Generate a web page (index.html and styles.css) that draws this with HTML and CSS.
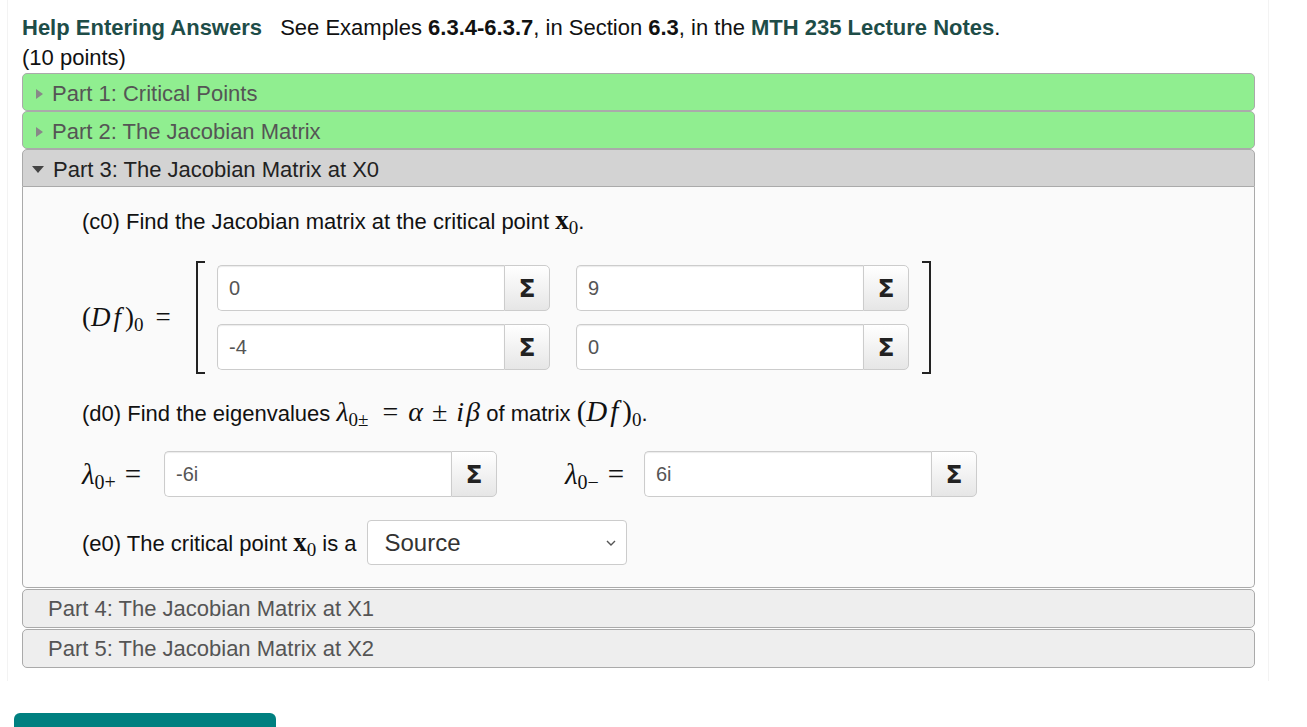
FILE: index.html
```html
<!DOCTYPE html>
<html lang="en">
<head>
    <meta charset="UTF-8">
    <meta name="viewport" content="width=device-width, initial-scale=1.0">
    <title>Jacobian Matrix</title>
    <link rel="stylesheet" href="styles.css">
</head>
<body>
    <div class="problem">
        <div class="intro">
            <b class="link">Help Entering Answers</b>
            <span class="spacer"></span>See Examples <b>6.3.4-6.3.7</b>, in Section <b>6.3</b>, in the <b class="link">MTH 235 Lecture Notes</b>.
        </div>
        <div class="points">(10 points)</div>

        <div class="accordion">
            <div class="part-head done"><span class="tri right"></span>Part 1: Critical Points</div>
            <div class="part-head done"><span class="tri right"></span>Part 2: The Jacobian Matrix</div>
            <div class="part-head open"><span class="tri down"></span>Part 3: The Jacobian Matrix at X0</div>
            <div class="part-body">
                <p class="question">(c0) Find the Jacobian matrix at the critical point <span class="bx">x</span><sub class="msub">0</sub>.</p>

                <div class="matrix-row">
                    <div class="math lhs">(<i>D</i><i class="f">f</i>)<sub class="msub">0</sub><span class="eq">=</span></div>
                    <div class="bracket left"></div>
                    <div class="matrix">
                        <div class="answer"><input type="text" value="0"><button class="sigma">Σ</button></div>
                        <div class="answer"><input type="text" value="9"><button class="sigma">Σ</button></div>
                        <div class="answer"><input type="text" value="-4"><button class="sigma">Σ</button></div>
                        <div class="answer"><input type="text" value="0"><button class="sigma">Σ</button></div>
                    </div>
                    <div class="bracket right"></div>
                </div>

                <p class="question">(d0) Find the eigenvalues <span class="math mid"><i>λ</i><sub class="msub">0±</sub><span class="eq">=</span><i>α</i><span class="pm">±</span><i class="i">i</i><i>β</i></span> of matrix <span class="math big">(<i>D</i><i class="f">f</i>)<sub class="msub">0</sub></span>.</p>

                <div class="eigen-row">
                    <div class="math lam"><i>λ</i><sub class="msub">0+</sub><span class="eq">=</span></div>
                    <div class="answer"><input type="text" value="-6i"><button class="sigma">Σ</button></div>
                    <div class="math lam second"><i>λ</i><sub class="msub">0−</sub><span class="eq">=</span></div>
                    <div class="answer"><input type="text" value="6i"><button class="sigma">Σ</button></div>
                </div>

                <div class="select-row">
                    <span>(e0) The critical point <span class="bx">x</span><sub class="msub">0</sub> is a</span>
                    <div class="select">Source
                        <svg width="12" height="8" viewBox="0 0 12 8"><path d="M2 2 L6 6 L10 2" fill="none" stroke="#555" stroke-width="1.4"/></svg>
                    </div>
                </div>
            </div>
            <div class="part-head closed">Part 4: The Jacobian Matrix at X1</div>
            <div class="part-head closed">Part 5: The Jacobian Matrix at X2</div>
        </div>
    </div>
    <button class="submit"></button>
</body>
</html>
```

FILE: styles.css
```css
body {
    margin: 0;
    font-family: "Liberation Sans", Arial, sans-serif;
    color: #111;
    background: #fff;
}

.problem {
    width: 1233px;
    margin-left: 7px;
    padding: 13px 13px 13px 14px;
    border-left: 1px solid #f3f3f3;
    border-right: 1px solid #f3f3f3;
}

.intro, .points {
    font-size: 22px;
    line-height: 30px;
}

.link {
    color: #1e4d48;
}

.spacer {
    display: inline-block;
    width: 12px;
}

.part-head {
    height: 33px;
    padding-top: 3px;
    font-size: 22px;
    border: 1px solid #aaa;
    border-radius: 5px;
    padding-left: 8px;
    display: flex;
    align-items: center;
}

.part-head.done {
    background: #90ee90;
    color: #555;
}

.part-head.open {
    background: #d3d3d3;
    color: #222;
    border-radius: 5px 5px 0 0;
}

.part-head.closed {
    background: #eee;
    color: #555;
    padding-left: 25px;
    height: 37px;
    padding-top: 0;
    margin-top: 1px;
}

.tri {
    display: inline-block;
    width: 0;
    height: 0;
    margin-right: 9px;
}

.tri.right {
    border-top: 5px solid transparent;
    border-bottom: 5px solid transparent;
    border-left: 7px solid #888;
    margin-left: 5px;
}

.tri.down {
    border-left: 6px solid transparent;
    border-right: 6px solid transparent;
    border-top: 7px solid #444;
    margin-left: 1px;
    margin-right: 9px;
}

.part-body {
    background: #fafafa;
    border: 1px solid #aaa;
    border-top: none;
    border-radius: 0 0 5px 5px;
    padding: 20px 0 22px 59px;
    margin-bottom: 1px;
}

.question {
    margin: 0;
    font-size: 22px;
    line-height: 30px;
}

.question .math, .question .bx {
    line-height: 0;
}

.math {
    font-family: "Liberation Serif", "DejaVu Serif", serif;
    font-size: 27px;
}

.math i {
    font-style: italic;
}

.math i.f {
    margin: 0 4px 0 3px;
}

.math i.i {
    margin-right: 2px;
}

.eq {
    margin: 0 9px 0 12px;
}

.pm {
    margin: 0 9px;
}

.msub {
    font-family: "Liberation Serif", serif;
    font-style: normal;
    font-size: 19px;
    vertical-align: -5px;
    line-height: 0;
}

.bx {
    font-family: "Liberation Serif", serif;
    font-weight: bold;
    font-size: 27px;
}

.matrix-row {
    display: flex;
    align-items: center;
    margin: 24px 0 25px;
}

.lhs {
    width: 114px;
}

.bracket {
    width: 7px;
    height: 109px;
    border: 2px solid #222;
}

.bracket.left {
    border-right: none;
    margin-right: 12px;
}

.bracket.right {
    border-left: none;
    margin-left: 13px;
}

.matrix {
    display: grid;
    grid-template-columns: 333px 333px;
    column-gap: 26px;
    row-gap: 13px;
}

.answer {
    display: flex;
    height: 46px;
}

.answer input {
    flex: 1;
    min-width: 0;
    border: 1px solid #ccc;
    border-right: none;
    border-radius: 5px 0 0 5px;
    background: #fff;
    font-family: "Liberation Sans", Arial, sans-serif;
    font-size: 20px;
    color: #555;
    padding: 0 11px;
    box-shadow: inset 0 1px 1px rgba(0, 0, 0, 0.08);
}

.sigma {
    width: 46px;
    border: 1px solid #ccc;
    border-radius: 0 5px 5px 0;
    background: linear-gradient(#fff, #e6e6e6);
    font-family: "DejaVu Sans", sans-serif;
    font-weight: bold;
    font-size: 25px;
    color: #222;
    padding: 0;
}

.eigen-row {
    display: flex;
    align-items: center;
    margin: 22px 0 23px;
}

.eigen-row .answer {
    width: 333px;
}

.mid {
    font-size: 28px;
}

.mid .eq {
    margin: 0 10px 0 14px;
}

.lam {
    width: 82px;
    font-size: 29px;
}

.lam .msub {
    font-size: 20px;
}

.lam .eq {
    margin: 0 0 0 9px;
}

.lam.second {
    margin-left: 68px;
    width: 79px;
}

.big {
    font-size: 29px;
}

.select-row {
    display: flex;
    align-items: center;
    font-size: 22px;
}

.select {
    margin-left: 10px;
    width: 260px;
    height: 45px;
    border: 1px solid #ccc;
    border-radius: 4px;
    background: #fff;
    display: flex;
    align-items: center;
    justify-content: space-between;
    padding: 0 9px 0 17px;
    box-sizing: border-box;
    font-size: 24px;
    color: #333;
}

.submit {
    display: block;
    margin: 32px 0 0 14px;
    width: 262px;
    height: 40px;
    border: none;
    border-radius: 6px;
    background: #008080;
}
```
